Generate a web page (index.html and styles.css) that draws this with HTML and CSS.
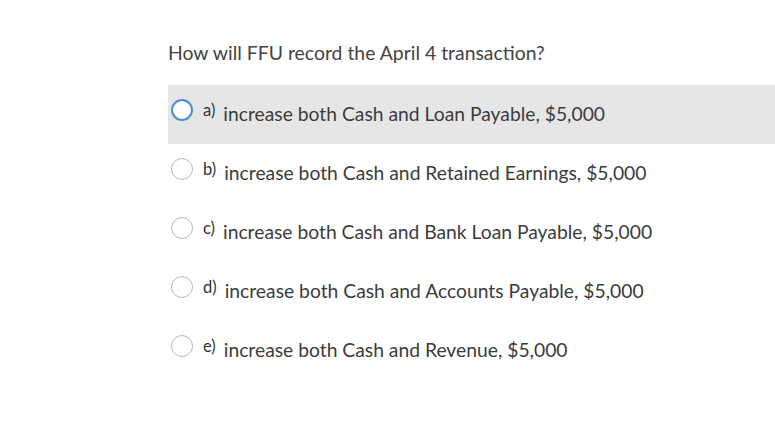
FILE: index.html
```html
<!DOCTYPE html>
<html>
<head>
<meta charset="utf-8">
<link rel="stylesheet" href="styles.css">
</head>
<body>
<div class="quiz">
  <p class="question">How will FFU record the April 4 transaction?</p>
  <ul class="options">
    <li class="option selected"><span class="radio"></span><span class="letter">a)</span><span class="text">increase both Cash and Loan Payable, $5,000</span></li>
    <li class="option"><span class="radio"></span><span class="letter">b)</span><span class="text">increase both Cash and Retained Earnings, $5,000</span></li>
    <li class="option"><span class="radio"></span><span class="letter">c)</span><span class="text">increase both Cash and Bank Loan Payable, $5,000</span></li>
    <li class="option"><span class="radio"></span><span class="letter">d)</span><span class="text">increase both Cash and Accounts Payable, $5,000</span></li>
    <li class="option"><span class="radio"></span><span class="letter">e)</span><span class="text">increase both Cash and Revenue, $5,000</span></li>
  </ul>
</div>
</body>
</html>
```
FILE: styles.css
```css
html, body {
  margin: 0;
  padding: 0;
  background: #ffffff;
}
body {
  font-family: Lato, "Open Sans", sans-serif;
  color: #3a3a3a;
}
.quiz {
  padding: 41px 0 0 168px;
}
.question {
  margin: 0 0 20px 0;
  font-size: 19.4px;
  line-height: 24px;
  color: #444444;
}
.options {
  list-style: none;
  margin: 0;
  padding: 0;
}
.option {
  display: flex;
  align-items: center;
  height: 59px;
  padding-left: 3px;
  font-size: 19.3px;
  color: #3c3c3c;
}
.option.selected {
  background: #e6e6e6;
  height: 59px;
}
.radio {
  box-sizing: border-box;
  width: 22px;
  height: 22px;
  border-radius: 50%;
  border: 1.5px solid #b8b8b8;
  background: #fff;
  margin-right: 10px;
  margin-top: -9px;
}
.selected .radio {
  border: 2px solid #4a8fd0;
}
.letter {
  font-size: 16.5px;
  margin-right: 8px;
  margin-top: -9px;
  color: #333;
}
.text {
  margin-top: -2px;
}
```
